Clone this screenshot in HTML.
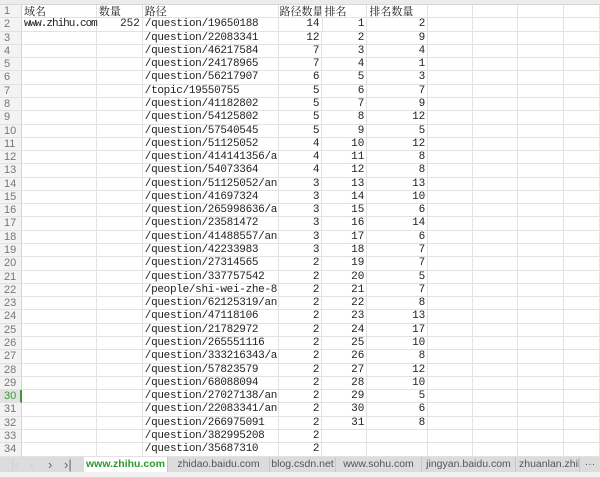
<!DOCTYPE html>
<html><head><meta charset="utf-8"><style>
*{margin:0;padding:0;box-sizing:border-box}
body{width:600px;height:477px;overflow:hidden;background:#fff;position:relative;font-family:"Liberation Mono","Noto Serif CJK SC",monospace;font-size:11px;color:#222}
.top{position:absolute;left:0;top:0;width:600px;height:5px;background:#ececec;border-bottom:1px solid #d8d8d8}
.r{position:absolute;left:0;height:13.28px;width:600px;display:flex}
.r div{height:13.28px;line-height:13px;border-right:1px solid #e2e2e2;border-bottom:1px solid #e2e2e2;overflow:hidden;white-space:nowrap;padding:0 2px}
.n{width:22px;background:#f3f3f3;color:#777;font-family:"Liberation Sans",sans-serif;font-size:11px;padding-left:4px!important;border-right:1px solid #d4d4d4!important}
.a{width:75px}.b{width:46px;text-align:right}.c{width:136px;letter-spacing:-0.3px}.d{width:44px;text-align:right}.e{width:45px;text-align:right}.f{width:61px;text-align:right}.g{width:45px}.h{width:45px}.i{width:46px}.j{width:36px}
.cj{font-family:"Noto Serif CJK SC","Liberation Serif",serif;font-size:11px;letter-spacing:0}
.sel .n{background:#e2e2e2;color:#3a9a3a;border-right:2px solid #3a9a3a!important}
.tabs{position:absolute;left:0;top:457px;width:600px;height:15px;background:#dcdcdc;font-family:"Liberation Sans",sans-serif;font-size:10.5px;color:#555}
.tabs span{position:absolute;top:0;height:15px;line-height:15px;text-align:center;border-right:1px solid #c8c8c8}
.bot{position:absolute;left:0;top:472px;width:600px;height:5px;background:#f2f2f2}
</style></head><body>
<div class="top"></div>
<div class="r" style="top:5px"><div class="n">1</div><div class="a cj">域名</div><div class="b cj" style="text-align:left">数量</div><div class="c cj">路径</div><div class="d cj" style="text-align:left;padding:0 1px">路径数量</div><div class="e cj" style="text-align:left">排名</div><div class="f cj" style="text-align:left">排名数量</div><div class="g"></div><div class="h"></div><div class="i"></div><div class="j"></div></div>
<div class="r" style="top:18.28px"><div class="n">2</div><div class="a" style="overflow:visible;letter-spacing:-1px">www.zhihu.com</div><div class="b">252</div><div class="c">/question/19650188</div><div class="d">14</div><div class="e">1</div><div class="f">2</div><div class="g"></div><div class="h"></div><div class="i"></div><div class="j"></div></div>
<div class="r" style="top:31.56px"><div class="n">3</div><div class="a"></div><div class="b"></div><div class="c">/question/22083341</div><div class="d">12</div><div class="e">2</div><div class="f">9</div><div class="g"></div><div class="h"></div><div class="i"></div><div class="j"></div></div>
<div class="r" style="top:44.84px"><div class="n">4</div><div class="a"></div><div class="b"></div><div class="c">/question/46217584</div><div class="d">7</div><div class="e">3</div><div class="f">4</div><div class="g"></div><div class="h"></div><div class="i"></div><div class="j"></div></div>
<div class="r" style="top:58.12px"><div class="n">5</div><div class="a"></div><div class="b"></div><div class="c">/question/24178965</div><div class="d">7</div><div class="e">4</div><div class="f">1</div><div class="g"></div><div class="h"></div><div class="i"></div><div class="j"></div></div>
<div class="r" style="top:71.4px"><div class="n">6</div><div class="a"></div><div class="b"></div><div class="c">/question/56217907</div><div class="d">6</div><div class="e">5</div><div class="f">3</div><div class="g"></div><div class="h"></div><div class="i"></div><div class="j"></div></div>
<div class="r" style="top:84.68px"><div class="n">7</div><div class="a"></div><div class="b"></div><div class="c">/topic/19550755</div><div class="d">5</div><div class="e">6</div><div class="f">7</div><div class="g"></div><div class="h"></div><div class="i"></div><div class="j"></div></div>
<div class="r" style="top:97.96px"><div class="n">8</div><div class="a"></div><div class="b"></div><div class="c">/question/41182802</div><div class="d">5</div><div class="e">7</div><div class="f">9</div><div class="g"></div><div class="h"></div><div class="i"></div><div class="j"></div></div>
<div class="r" style="top:111.24px"><div class="n">9</div><div class="a"></div><div class="b"></div><div class="c">/question/54125802</div><div class="d">5</div><div class="e">8</div><div class="f">12</div><div class="g"></div><div class="h"></div><div class="i"></div><div class="j"></div></div>
<div class="r" style="top:124.52px"><div class="n">10</div><div class="a"></div><div class="b"></div><div class="c">/question/57540545</div><div class="d">5</div><div class="e">9</div><div class="f">5</div><div class="g"></div><div class="h"></div><div class="i"></div><div class="j"></div></div>
<div class="r" style="top:137.8px"><div class="n">11</div><div class="a"></div><div class="b"></div><div class="c">/question/51125052</div><div class="d">4</div><div class="e">10</div><div class="f">12</div><div class="g"></div><div class="h"></div><div class="i"></div><div class="j"></div></div>
<div class="r" style="top:151.08px"><div class="n">12</div><div class="a"></div><div class="b"></div><div class="c">/question/414141356/answer/</div><div class="d">4</div><div class="e">11</div><div class="f">8</div><div class="g"></div><div class="h"></div><div class="i"></div><div class="j"></div></div>
<div class="r" style="top:164.36px"><div class="n">13</div><div class="a"></div><div class="b"></div><div class="c">/question/54073364</div><div class="d">4</div><div class="e">12</div><div class="f">8</div><div class="g"></div><div class="h"></div><div class="i"></div><div class="j"></div></div>
<div class="r" style="top:177.64px"><div class="n">14</div><div class="a"></div><div class="b"></div><div class="c">/question/51125052/answer/2</div><div class="d">3</div><div class="e">13</div><div class="f">13</div><div class="g"></div><div class="h"></div><div class="i"></div><div class="j"></div></div>
<div class="r" style="top:190.92px"><div class="n">15</div><div class="a"></div><div class="b"></div><div class="c">/question/41697324</div><div class="d">3</div><div class="e">14</div><div class="f">10</div><div class="g"></div><div class="h"></div><div class="i"></div><div class="j"></div></div>
<div class="r" style="top:204.2px"><div class="n">16</div><div class="a"></div><div class="b"></div><div class="c">/question/265998636/answer/</div><div class="d">3</div><div class="e">15</div><div class="f">6</div><div class="g"></div><div class="h"></div><div class="i"></div><div class="j"></div></div>
<div class="r" style="top:217.48px"><div class="n">17</div><div class="a"></div><div class="b"></div><div class="c">/question/23581472</div><div class="d">3</div><div class="e">16</div><div class="f">14</div><div class="g"></div><div class="h"></div><div class="i"></div><div class="j"></div></div>
<div class="r" style="top:230.76px"><div class="n">18</div><div class="a"></div><div class="b"></div><div class="c">/question/41488557/answer/8</div><div class="d">3</div><div class="e">17</div><div class="f">6</div><div class="g"></div><div class="h"></div><div class="i"></div><div class="j"></div></div>
<div class="r" style="top:244.04px"><div class="n">19</div><div class="a"></div><div class="b"></div><div class="c">/question/42233983</div><div class="d">3</div><div class="e">18</div><div class="f">7</div><div class="g"></div><div class="h"></div><div class="i"></div><div class="j"></div></div>
<div class="r" style="top:257.32px"><div class="n">20</div><div class="a"></div><div class="b"></div><div class="c">/question/27314565</div><div class="d">2</div><div class="e">19</div><div class="f">7</div><div class="g"></div><div class="h"></div><div class="i"></div><div class="j"></div></div>
<div class="r" style="top:270.6px"><div class="n">21</div><div class="a"></div><div class="b"></div><div class="c">/question/337757542</div><div class="d">2</div><div class="e">20</div><div class="f">5</div><div class="g"></div><div class="h"></div><div class="i"></div><div class="j"></div></div>
<div class="r" style="top:283.88px"><div class="n">22</div><div class="a"></div><div class="b"></div><div class="c">/people/shi-wei-zhe-87/answ</div><div class="d">2</div><div class="e">21</div><div class="f">7</div><div class="g"></div><div class="h"></div><div class="i"></div><div class="j"></div></div>
<div class="r" style="top:297.16px"><div class="n">23</div><div class="a"></div><div class="b"></div><div class="c">/question/62125319/answer/6</div><div class="d">2</div><div class="e">22</div><div class="f">8</div><div class="g"></div><div class="h"></div><div class="i"></div><div class="j"></div></div>
<div class="r" style="top:310.44px"><div class="n">24</div><div class="a"></div><div class="b"></div><div class="c">/question/47118106</div><div class="d">2</div><div class="e">23</div><div class="f">13</div><div class="g"></div><div class="h"></div><div class="i"></div><div class="j"></div></div>
<div class="r" style="top:323.72px"><div class="n">25</div><div class="a"></div><div class="b"></div><div class="c">/question/21782972</div><div class="d">2</div><div class="e">24</div><div class="f">17</div><div class="g"></div><div class="h"></div><div class="i"></div><div class="j"></div></div>
<div class="r" style="top:337px"><div class="n">26</div><div class="a"></div><div class="b"></div><div class="c">/question/265551116</div><div class="d">2</div><div class="e">25</div><div class="f">10</div><div class="g"></div><div class="h"></div><div class="i"></div><div class="j"></div></div>
<div class="r" style="top:350.28px"><div class="n">27</div><div class="a"></div><div class="b"></div><div class="c">/question/333216343/answer/</div><div class="d">2</div><div class="e">26</div><div class="f">8</div><div class="g"></div><div class="h"></div><div class="i"></div><div class="j"></div></div>
<div class="r" style="top:363.56px"><div class="n">28</div><div class="a"></div><div class="b"></div><div class="c">/question/57823579</div><div class="d">2</div><div class="e">27</div><div class="f">12</div><div class="g"></div><div class="h"></div><div class="i"></div><div class="j"></div></div>
<div class="r" style="top:376.84px"><div class="n">29</div><div class="a"></div><div class="b"></div><div class="c">/question/68088094</div><div class="d">2</div><div class="e">28</div><div class="f">10</div><div class="g"></div><div class="h"></div><div class="i"></div><div class="j"></div></div>
<div class="r sel" style="top:390.12px"><div class="n">30</div><div class="a"></div><div class="b"></div><div class="c">/question/27027138/answer/2</div><div class="d">2</div><div class="e">29</div><div class="f">5</div><div class="g"></div><div class="h"></div><div class="i"></div><div class="j"></div></div>
<div class="r" style="top:403.4px"><div class="n">31</div><div class="a"></div><div class="b"></div><div class="c">/question/22083341/answer/6</div><div class="d">2</div><div class="e">30</div><div class="f">6</div><div class="g"></div><div class="h"></div><div class="i"></div><div class="j"></div></div>
<div class="r" style="top:416.68px"><div class="n">32</div><div class="a"></div><div class="b"></div><div class="c">/question/266975091</div><div class="d">2</div><div class="e">31</div><div class="f">8</div><div class="g"></div><div class="h"></div><div class="i"></div><div class="j"></div></div>
<div class="r" style="top:429.96px"><div class="n">33</div><div class="a"></div><div class="b"></div><div class="c">/question/382995208</div><div class="d">2</div><div class="e"></div><div class="f"></div><div class="g"></div><div class="h"></div><div class="i"></div><div class="j"></div></div>
<div class="r" style="top:443.24px"><div class="n">34</div><div class="a"></div><div class="b"></div><div class="c">/question/35687310</div><div class="d">2</div><div class="e"></div><div class="f"></div><div class="g"></div><div class="h"></div><div class="i"></div><div class="j"></div></div>
<div class="tabs">
<span style="left:0;width:84px;border:none;text-align:left;color:#666;font-size:13px"><b style="position:absolute;left:11px;color:#d0d0d0;font-weight:normal">|&lsaquo;</b><b style="position:absolute;left:30px;color:#d0d0d0;font-weight:normal">&lsaquo;</b><b style="position:absolute;left:48px;font-weight:normal">&rsaquo;</b><b style="position:absolute;left:64px;font-weight:normal">&rsaquo;|</b></span>
<span style="left:84px;width:84px;background:#fff;color:#2e9a2e;font-weight:bold">www.zhihu.com</span>
<span style="left:168px;width:102px">zhidao.baidu.com</span>
<span style="left:270px;width:66px">blog.csdn.net</span>
<span style="left:336px;width:86px">www.sohu.com</span>
<span style="left:422px;width:94px">jingyan.baidu.com</span>
<span style="left:516px;width:64px;overflow:hidden;text-align:left;padding-left:3px">zhuanlan.zhihu.com</span>
<span style="left:580px;width:20px;border:none">···</span>
</div>
<div class="bot"></div>
</body></html>
